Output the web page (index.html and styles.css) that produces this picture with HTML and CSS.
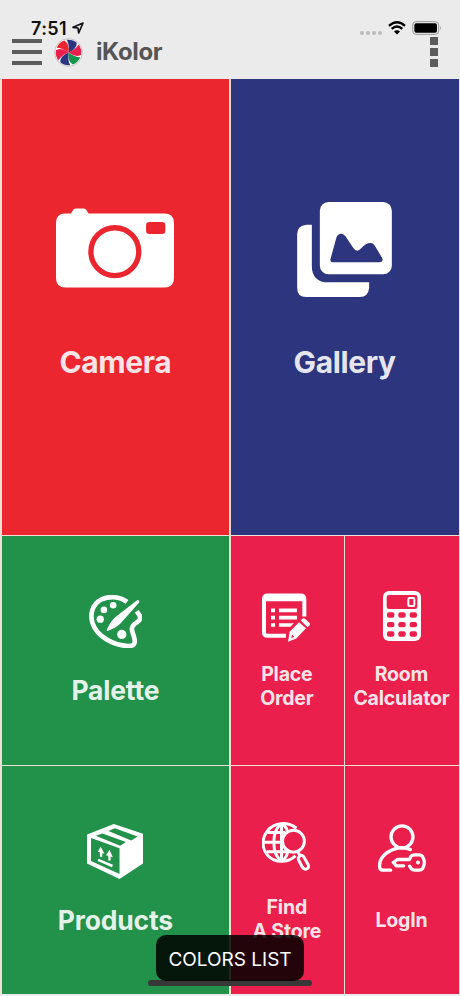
FILE: index.html
```html
<!DOCTYPE html>
<html lang="en">
<head>
    <meta charset="UTF-8">
    <meta name="viewport" content="width=device-width, initial-scale=1.0">
    <title>iKolor</title>
    <link rel="stylesheet" href="styles.css">
</head>
<body>
    <!-- Header -->
    <header class="header">
        <div class="status">
            <span class="time">7:51</span>
            <svg class="location" viewBox="0 0 36 36"><path d="M3 16 L33 3 L20 33 L18 18 Z" fill="none" stroke="#111" stroke-width="5" stroke-linejoin="round"/></svg>
            <div class="dots"><i></i><i></i><i></i><i></i></div>
            <svg class="wifi" viewBox="0 0 54 41">
                <path d="M3 14 Q27 -7 51 14" fill="none" stroke="#000" stroke-width="7"/>
                <path d="M11 23 Q27 9 43 23" fill="none" stroke="#000" stroke-width="7"/>
                <path d="M18 31 Q27 23 36 31 L27 40 Z" fill="#000"/>
            </svg>
            <svg class="battery" viewBox="0 0 90 42">
                <rect x="2" y="2" width="78" height="38" rx="10" fill="none" stroke="#999" stroke-width="3"/>
                <rect x="7" y="7" width="68" height="28" rx="6" fill="#000"/>
                <path d="M84 14 Q89 21 84 28 Z" fill="#888"/>
            </svg>
        </div>
        <nav class="bar">
            <div class="burger"><i></i><i></i><i></i></div>
            <svg class="logo" viewBox="-44 -44 88 88">
                <circle r="42" fill="#fff" stroke="#aaa" stroke-width="2"/>
                <defs>
                    <path id="petal" d="M0 0 Q-1 -24 -12 -37 Q6 -42 20 -33 Q22 -14 0 0 Z"/>
                </defs>
                <use href="#petal" fill="#2b3580" transform="rotate(10)"/>
                <use href="#petal" fill="#ea1f4b" transform="rotate(70)"/>
                <use href="#petal" fill="#15944c" transform="rotate(130)"/>
                <use href="#petal" fill="#2b3580" transform="rotate(190)"/>
                <use href="#petal" fill="#ea1f4b" transform="rotate(250)"/>
                <use href="#petal" fill="#eb262f" transform="rotate(310)"/>
            </svg>
            <h1>iKolor</h1>
            <div class="more"><i></i><i></i><i></i></div>
        </nav>
    </header>

    <!-- Tiles -->
    <main class="grid">
        <a class="tile red big">
            <svg class="icon-camera" viewBox="50 54 355 240">
                <path d="M78 70 H95 L102 59 Q105 55 111 55 H132 Q138 55 141 59 L148 70 H376 Q405 70 405 99 V264 Q405 293 376 293 H79 Q50 293 50 264 V99 Q50 70 78 70 Z" fill="#fff"/>
                <circle cx="227" cy="185" r="72" fill="none" stroke="#eb262f" stroke-width="16"/>
                <rect x="321" y="96" width="58" height="36" rx="10" fill="#eb262f"/>
            </svg>
            <span class="label">Camera</span>
        </a>
        <a class="tile blue big">
            <svg class="icon-gallery" viewBox="52 36 284 285">
                <rect x="120" y="36" width="216" height="217" rx="26" fill="#fff"/>
                <path d="M96 104 H80 Q52 107 52 132 V294 Q52 321 79 321 H240 Q265 321 268 294 V277 H146 Q96 277 96 227 Z" fill="#fff"/>
                <path d="M152 207 L170 142 Q174 131 184 131 Q192 131 197 139 L220 173 Q231 190 244 175 Q258 159 272 159 Q280 159 284 166 L307 204 Q312 216 300 217 H160 Q150 217 152 207 Z" fill="#2c357d"/>
            </svg>
            <span class="label">Gallery</span>
        </a>

        <a class="tile green medium">
            <svg class="icon-palette" viewBox="115 44 160 160">
                <path d="M230 65 C206 47 176 47 153 57 C124 73 117 102 126 130 C140 170 190 197 233 198 C253 199 256 188 251 171 C245 151 239 143 252 132 C265 124 272 119 268 106 L259 93" fill="none" stroke="#fff" stroke-width="14"/>
                <path d="M261 59 Q268 58 267 66 L210 130 Q198 142 171 153 Q167 153 169 148 Q182 119 198 108 Z" fill="#fff"/>
                <circle cx="188" cy="75" r="10" fill="#fff"/>
                <circle cx="160" cy="89" r="10" fill="#fff"/>
                <circle cx="149" cy="117" r="11" fill="#fff"/>
                <circle cx="214" cy="163" r="14" fill="#fff"/>
            </svg>
            <span class="label">Palette</span>
        </a>
        <div class="pair">
            <a class="tile pink small">
                <svg class="icon-order" viewBox="111 38 144 146">
                    <path d="M183 166 H128 Q117 166 117 155 V56 Q117 45 128 45 H227 Q238 45 238 56 V108" fill="none" stroke="#fff" stroke-width="12"/>
                    <path d="M117 44 H238 V62 H117 Z" fill="#fff"/>
                    <path d="M138 84 H150 V95 H138 Z M138 106 H150 V117 H138 Z M138 128 H150 V139 H138 Z M162 84 H216 V95 H162 Z M162 106 H216 V117 H162 Z M162 128 H207 L196 139 H162 Z" fill="#fff"/>
                    <path d="M222 125 L243 143 L214 174 L189 184 L194 154 Z M201 162 L199 173 L208 169 Z" fill="#fff" fill-rule="evenodd"/>
                    <path d="M227 120 L232 115 Q236 112 240 115 L253 127 Q257 131 253 135 L248 140 Z" fill="#fff"/>
                </svg>
                <span class="label">Place<br>Order</span>
            </a>
            <a class="tile pink small">
                <svg class="icon-calc" viewBox="473 33 114 150">
                    <rect x="473" y="33" width="114" height="150" rx="18" fill="#fff"/>
                    <rect x="484" y="45" width="92" height="42" rx="7" fill="#ea1f4b"/>
                    <rect x="549" y="54" width="18" height="24" rx="3" fill="none" stroke="#fff" stroke-width="6"/>
                    <g fill="#ea1f4b">
                        <rect x="485" y="97" width="22" height="16" rx="6"/><rect x="519" y="97" width="22" height="16" rx="6"/><rect x="553" y="97" width="22" height="16" rx="6"/>
                        <rect x="485" y="126" width="22" height="16" rx="6"/><rect x="519" y="126" width="22" height="16" rx="6"/><rect x="553" y="126" width="22" height="16" rx="6"/>
                        <rect x="485" y="154" width="22" height="16" rx="6"/><rect x="519" y="154" width="22" height="16" rx="6"/><rect x="553" y="154" width="22" height="16" rx="6"/>
                    </g>
                </svg>
                <span class="label">Room<br>Calculator</span>
            </a>
        </div>

        <a class="tile green medium">
            <svg class="icon-box" viewBox="141 41 167 164">
                <path d="M141 72 L221 41 L308 70 V159 L238 205 L141 159 Z" fill="#fff"/>
                <path d="M153 83 L238 113 V190 L153 151 Z M167 76 L187 69 L257 95 L240 106 Z M205 62 L224 54 L292 78 L273 90 Z" fill="#22914a"/>
                <path d="M174 148 L217 166" stroke="#fff" stroke-width="8"/>
                <path d="M183 139 V121 M208 150 V131" stroke="#fff" stroke-width="7"/>
                <path d="M173 124 L182 109 L193 130 Z M198 134 L208 118 L218 140 Z" fill="#fff"/>
            </svg>
            <span class="label">Products</span>
        </a>
        <div class="pair">
            <a class="tile pink small">
                <svg class="icon-store" viewBox="110 37 145 146">
                    <g fill="none" stroke="#fff" stroke-width="9">
                        <path d="M214 55 C186 33 147 38 128 61 C108 84 109 118 128 138 C149 161 190 160 211 138"/>
                        <path d="M169 42 C138 61 138 135 169 153 C178 150 184 141 188 126 M169 42 C178 45 184 53 187 65 M169 42 V153"/>
                        <path d="M124 68 H180 M113 97 H167 M123 126 H186"/>
                        <circle cx="205" cy="94" r="33"/>
                        <path d="M219 128 L226 139"/>
                        <path d="M222 141 Q229 132 236 141 L250 166 Q252 177 244 178 Q237 180 232 173 L220 149 Q219 144 222 141 Z"/>
                    </g>
                </svg>
                <span class="label">Find<br>A Store</span>
            </a>
            <a class="tile pink small">
                <svg class="icon-login" viewBox="458 41 144 143">
                    <g fill="none" stroke="#fff" stroke-width="10" stroke-linecap="round" stroke-linejoin="round">
                        <circle cx="530" cy="79" r="33"/>
                        <path d="M555 117 C533 107 503 112 483 128 C468 140 461 155 463 170 Q464 179 474 179 H496"/>
                        <path d="M535 166 H513 L504 156 L516 147 H552 L557 137 Q561 133 568 133 H582 Q589 133 592 139 L596 148 Q598 156 596 164 L592 174 Q588 179 582 179 H568 Q561 179 558 175 L553 167"/>
                    </g>
                    <circle cx="578" cy="156" r="6" fill="#fff"/>
                </svg>
                <span class="label">LogIn</span>
            </a>
        </div>
    </main>

    <!-- Bottom button over the tiles -->
    <div class="home-bar"></div>
    <button class="colors-list">COLORS LIST</button>
</body>
</html>
```
FILE: styles.css
```css
* {
    box-sizing: border-box;
}
body {
    margin: 0;
    height: 996px;
    position: relative;
    overflow: hidden;
    background-color: #ebebeb;
    font-family: Inter, "Liberation Sans", sans-serif;
}
svg {
    display: block;
    flex: none;
}

/* Header */
.header {
    height: 79px;
    padding-top: 18px;
}
.status {
    display: flex;
    height: 20px;
    padding: 0 18px 0 31px;
    align-items: center;
}
.time {
    font-size: 18px;
    font-weight: 600;
    letter-spacing: 0.4px;
    line-height: 20px;
    width: 40px;
    padding-top: 2px;
    color: #111;
}
.location {
    width: 12px;
    height: 12px;
    margin-left: 1px;
}
.dots {
    display: flex;
    gap: 2px;
    margin: 10px 6px 0 auto;
}
.dots i {
    width: 4px;
    height: 4px;
    border-radius: 50%;
    background-color: #bbb;
}
.wifi {
    width: 18px;
    height: 14px;
    margin-right: 6px;
}
.battery {
    width: 30px;
    height: 14px;
}
.bar {
    display: flex;
    align-items: center;
    height: 28px;
    padding: 0 22px 0 12px;
}
.burger {
    display: flex;
    flex-direction: column;
    gap: 7px;
    width: 30px;
}
.burger i {
    height: 4px;
    background-color: #5c5c5c;
}
.logo {
    width: 29px;
    height: 29px;
    margin-left: 12px;
}
h1 {
    margin: 0 0 0 13px;
    font-size: 24px;
    line-height: 28px;
    font-weight: 700;
    letter-spacing: -0.4px;
    color: #555;
}
.more {
    display: flex;
    flex-direction: column;
    gap: 3px;
    margin-left: auto;
}
.more i {
    width: 8px;
    height: 8px;
    background-color: #5c5c5c;
}

/* Tiles */
.grid {
    display: grid;
    grid-template-columns: 1fr 1fr;
    grid-template-rows: 455.5px 228.5px 228px;
    gap: 1.5px;
    padding: 0 1.5px;
    background-color: #f1dfd3;
}
.pair {
    display: grid;
    grid-template-columns: 1fr 1fr;
    gap: 1.5px;
}
.tile {
    display: flex;
    flex-direction: column;
    align-items: center;
    text-align: center;
    color: rgba(255, 255, 255, 0.9);
    font-weight: 700;
}
.red { background-color: #eb262f; }
.blue { background-color: #2c357d; }
.green { background-color: #22914a; }
.pink { background-color: #ea1f4b; }

.big { font-size: 30px; line-height: 36px; letter-spacing: -0.4px; }
.medium { font-size: 26.5px; line-height: 32px; letter-spacing: -0.2px; }
.small { font-size: 19.5px; line-height: 23.6px; letter-spacing: -0.2px; }
.small .label { margin-right: 1px; }

.icon-camera { width: 118px; height: 80px; margin: 129px 0 56px; }
.icon-gallery { width: 95px; height: 95px; margin: 123px 0 47px; }
.icon-palette { width: 53px; height: 53px; margin: 59px 0 26px; }
.icon-order { width: 48px; height: 49px; margin: 57px 2px 21px 0; }
.icon-calc { width: 38px; height: 50px; margin: 55px 0 22px; }
.icon-box { width: 56px; height: 55px; margin: 58px 0 25px; }
.icon-store { width: 48px; height: 49px; margin: 56px 2px 25px 0; }
.icon-login { width: 48px; height: 48px; margin: 58px 0 37px; }

/* Button */
.home-bar {
    position: absolute;
    left: 148px;
    bottom: 10px;
    width: 164px;
    height: 6px;
    border-radius: 3px;
    background-color: #383838;
}
.colors-list {
    position: absolute;
    left: 156px;
    bottom: 15px;
    width: 148px;
    height: 46px;
    padding: 2px 0 0;
    border: none;
    border-radius: 10px;
    background-color: rgba(0, 0, 0, 0.85);
    color: #fff;
    font-family: inherit;
    font-size: 19px;
    font-weight: 400;
}
```
